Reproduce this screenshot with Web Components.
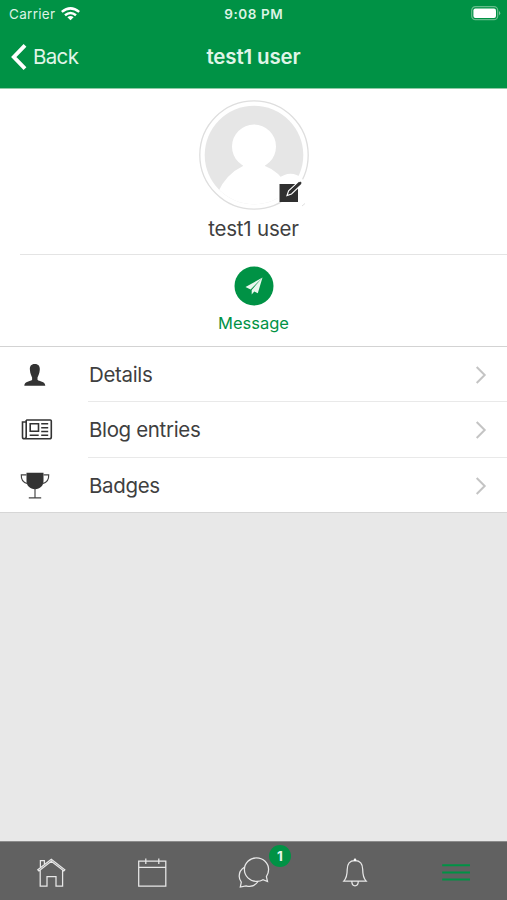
<!DOCTYPE html>
<html lang="en">
<head>
<meta charset="utf-8">
<title>test1 user</title>
<style>
html, body { margin: 0; height: 100%; }
body { font-family: Inter, "Liberation Sans", sans-serif; color: #3f3f3f; background: #e8e8e8; --green: #009245; }
</style>
</head>
<body>
<profile-page></profile-page>
<script>
const define = (name, html) => customElements.define(name, class extends HTMLElement {
  constructor() {
    super();
    const t = document.createElement('template');
    t.innerHTML = html;
    this.attachShadow({ mode: 'open' }).append(t.content.cloneNode(true));
  }
});

define('status-bar', `
<style>
:host { display: grid; grid-template-columns: 1fr auto 1fr; align-items: center; height: 28px; color: #dcf3e4; font-size: 13.5px; line-height: 28px; }
.left { display: flex; align-items: center; padding-left: 9px; gap: 6px; letter-spacing: .3px; }
.time { font-weight: 600; letter-spacing: .6px; margin-right: -.6px; }
.right { display: flex; justify-content: flex-end; padding-right: 6px; }
svg { display: block; }
.right svg { margin-top: -1px; }
</style>
<div class="left"><span>Carrier</span>
<svg width="19" height="14" viewBox="0 0 19 14" fill="none" stroke="#fff" stroke-width="2.5"><path d="M.8 4.9Q9.5-2.1 18.2 4.9M4 8.3Q9.5 3.7 15 8.3"/><path d="M6.4 10.3Q9.5 7.6 12.6 10.3L9.5 13.3Z" fill="#fff" stroke="none"/></svg></div>
<span class="time">9:08 PM</span>
<div class="right"><svg width="30" height="15" viewBox="0 0 30 15"><rect x=".7" y=".7" width="26" height="13" rx="3.7" fill="none" stroke="#66bd8c" stroke-width="1.2"/><rect x="2.4" y="2.4" width="22.6" height="9.6" rx="2" fill="#fff"/><path d="M28 5Q30.5 7.2 28 9.4Z" fill="#79c69a"/></svg></div>`);

define('nav-bar', `
<style>
:host { display: grid; grid-template-columns: 1fr auto 1fr; align-items: center; height: 57px; color: #e0f5e8; font-size: 20.5px; }
.back { display: flex; align-items: center; gap: 6px; padding-left: 11px; letter-spacing: -.65px; }
.title { font-weight: 600; letter-spacing: -.15px; }
svg { display: block; }
</style>
<div class="back"><svg width="16" height="26" viewBox="0 0 16 26" fill="none" stroke="#fff" stroke-width="3.9"><path d="M14 1.4 2.8 13 14 24.6"/></svg><span>Back</span></div>
<span class="title"><slot></slot></span><span></span>`);

define('user-avatar', `
<style>:host { display: block; width: 112px; height: 112px; } svg { display: block; }</style>
<svg width="112" height="112" viewBox="198 99 112 112">
<defs><clipPath id="c"><circle cx="254" cy="155" r="49.3"/></clipPath></defs>
<circle cx="254" cy="155" r="54.2" fill="#fff" stroke="#dedede" stroke-width="1.3"/>
<g clip-path="url(#c)"><rect x="200" y="100" width="110" height="110" fill="#e6e6e6"/>
<circle cx="254" cy="146.5" r="22" fill="#fff"/><path d="M243 162H265V166Q279 171 288 187L296 211H212L217.5 193Q226 174 243 166Z" fill="#fff"/></g>
<circle cx="290.5" cy="189.5" r="15.8" fill="#fff"/><path d="M302 206l3-2.5" stroke="#e0e0e0"/>
<path d="M279.5 184H298V202H279.5Z" fill="#303030"/>
<path d="M287 195.5 288.6 190.8 299 181.2 302 184 291.5 193.9Z" fill="#303030" stroke="#fff" stroke-width="1.1"/><path d="m290 192.4 11-10.2" stroke="#303030" stroke-width="2.2"/>
</svg>`);

define('profile-header', `
<style>
:host { display: flex; flex-direction: column; align-items: center; height: 156px; padding-top: 10px; box-sizing: content-box; background: #fff; }
.name { font-size: 20.5px; line-height: 24px; margin-top: 6px; letter-spacing: -.2px; }
.line { align-self: stretch; height: 1px; margin: 13px 0 0 20px; background: #e4e4e4; }
</style><user-avatar></user-avatar><div class="name"><slot></slot></div><div class="line"></div>`);

define('message-action', `
<style>
:host { display: flex; flex-direction: column; align-items: center; height: 92px; box-sizing: border-box; padding-top: 11px; background: #fff; color: var(--green); font-size: 16.5px; line-height: 20px; border-bottom: 1px solid #d3d3d3; }
span { margin-top: 7px; }
svg { display: block; }
</style>
<svg width="40" height="40" viewBox="234 266 40 40"><circle cx="254" cy="286" r="19.5" fill="var(--green)"/><path d="M262.5 277.5 245.5 287 250.6 289.5ZM262.5 277.5 251.7 290V294.4L254.3 291.5 257.8 293.2Z" fill="#eaf7ee"/></svg>
<span><slot></slot></span>`);

define('list-row', `
<style>
:host { display: flex; height: 55px; background: #fff; font-size: 20.5px; line-height: 55px; letter-spacing: -.35px; }
:host([tall]) { height: 56px; }
:host([last]) { height: 54px; }
.icon { width: 70px; height: 55px; padding-left: 19px; box-sizing: border-box; display: flex; align-items: center; }
.body { flex: 1; box-sizing: border-box; margin-left: 18px; padding-left: 1px; display: flex; justify-content: space-between; align-items: flex-start; border-bottom: 1px solid #e9e9e9; padding-right: 20px; }
:host([last]) .body { border-color: transparent; }
svg, ::slotted(svg) { display: block; }
.body svg { margin-top: 19px; }
</style>
<div class="icon"><slot name="icon"></slot></div>
<div class="body"><span><slot></slot></span><svg width="12" height="18" viewBox="0 0 12 18" fill="none" stroke="#c4c4c4" stroke-width="2"><path d="M1.7 1 9.7 9 1.7 17"/></svg></div>`);

define('tab-item', `
<style>
:host { flex: 1; display: flex; justify-content: center; align-items: center; position: relative; padding-top: 2px; }
::slotted(svg) { display: block; }
::slotted(b) { position: absolute; left: 66px; top: 3px; width: 22px; height: 22px; border-radius: 50%; background: var(--green); color: #e8f8ee; font-size: 13.5px; line-height: 22px; text-align: center; font-weight: 700; }
</style><slot></slot>`);

define('tab-bar', `
<style>:host { display: flex; box-sizing: border-box; height: 59px; background: #616161; border-top: 1px solid #8b8b8b; } svg { fill: none; stroke: #e8e8e8; stroke-width: 1.25; }</style>
<tab-item><svg width="34" height="34" viewBox="34 855 34 34"><path d="M37.8 869.8 51.3 859.2 64.8 869.8 63.8 871 51.3 861.3 38.9 871ZM40.2 870V886H47V876.5H56V886H62.6V870M40.4 867.2V860.6H44.4V864"/></svg></tab-item>
<tab-item><svg width="34" height="34" viewBox="135 855 34 34"><path d="M138.7 861.2H165.8V886H138.7ZM138.7 867.3H165.8M145.8 858.6V864M158.8 858.6V864" /></svg></tab-item>
<tab-item><svg width="34" height="34" viewBox="237 855 34 34"><path d="M268.6 869.5C268.6 863.2 263.2 857.8 256.5 857.8S244.4 863.1 244.4 869.5 249.8 881.4 256.5 881.4C258.9 881.4 261.1 881 263 879.7L267.5 881.5 266.4 876.6Q268.6 873.4 268.6 869.5ZM244.6 867Q239.1 870.3 239.2 876.2C239.2 879 240 880.4 241.3 882.2L240.3 887 246 885.8Q253.7 888 258 881.5"/></svg><b>1</b></tab-item>
<tab-item><svg width="34" height="34" viewBox="338 855 34 34"><path d="M343.8 881.2Q347.2 877.3 347.2 869.5C347.2 864 349.8 860.5 354.9 860.5S362.7 864 362.7 869.5Q362.7 877.3 366.2 881.2ZM351.8 881.5Q352 885.8 355 885.8T358.3 881.5"/><circle cx="355" cy="859.9" r="1.3" fill="#fff" stroke="none"/></svg></tab-item>
<tab-item><svg width="34" height="34" viewBox="439 855 34 34" style="stroke:var(--green);stroke-width:2"><path d="M442.2 865.3H470M442.2 872.6H470M442.2 879.6H470"/></svg></tab-item>`);

define('profile-page', `
<style>
:host { display: flex; flex-direction: column; width: 507px; height: 900px; }
header { background: var(--green); height: 88px; border-bottom: 1px solid #8fcaa6; box-sizing: content-box; }
.list { border-bottom: 1px solid #d6d6d6; background: #fff; }
.space { flex: 1; }
</style>
<header><status-bar></status-bar><nav-bar>test1 user</nav-bar></header>
<profile-header>test1 user</profile-header>
<message-action>Message</message-action>
<div class="list">
<list-row><svg slot="icon" width="34" height="34" viewBox="19 358 34 34"><path d="M34.8 364C31 364 29.6 366.4 29.9 369.8 30.1 373.7 31.6 376 32.1 377.6V379.8C30.5 381.8 24.5 381 24.3 385.7H45.3C45.1 381 39.1 381.8 37.5 379.8V377.6C38.1 376 39.5 373.7 39.8 369.8 40 366.4 38.6 364 34.8 364Z" fill="#333"/></svg>Details</list-row>
<list-row tall><svg slot="icon" width="34" height="34" viewBox="19 412.5 34 34" fill="none" stroke="#333" stroke-width="1.6"><path d="M26.2 419.5H50.3Q51.3 419.5 51.3 420.5V436.5Q51.3 438.3 49.5 438.3H24.3Q22.5 438.3 22.5 436.5V421.5H26.2V436Q26.2 438 24.5 438M26.2 421.5V419.5"/><path d="M30.2 423.2H38.5V430.8H30.2ZM41.2 423.3H48.2M41.2 427.2H48.2M41.2 431H48.2M29.7 434.7H38.7M41.2 434.7H48.2"/></svg>Blog entries</list-row>
<list-row last><svg slot="icon" width="34" height="34" viewBox="19 468.5 34 34"><path d="M26.5 472.2H43.5V480.5C43.5 485.5 40 488.3 35 488.7 30 488.3 26.5 485.5 26.5 480.5Z" fill="#333"/><path d="M26.5 474.3H21.3C21 479.5 23.3 482.3 27.5 483.1M43.5 474.3H48.7C49 479.5 46.7 482.3 42.5 483.1M35 488V497M28.8 497.3H41.2" fill="none" stroke="#444" stroke-width="1.15"/></svg>Badges</list-row>
</div>
<div class="space"></div>
<tab-bar></tab-bar>`);
</script>
</body>
</html>
